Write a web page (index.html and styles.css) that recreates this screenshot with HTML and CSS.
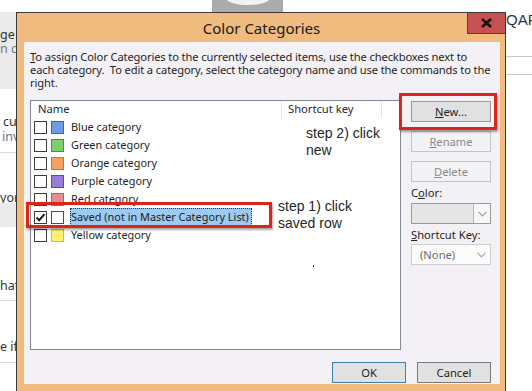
FILE: index.html
```html
<!DOCTYPE html>
<html>
<head>
<meta charset="utf-8">
<link rel="stylesheet" href="styles.css">
</head>
<body>
<div class="app">
  <div class="lp">
    <div class="lp-top"></div>
    <div class="lp-gray"><div class="t-dark">ge</div><div class="t-gray">n ca</div></div>
    <div class="lp-sec1"><div class="t-dark cu">cu</div><div class="t-blue">inv</div></div>
    <div class="lp-sec2"><div class="t-dark">yor</div></div>
    <div class="lp-band"></div>
    <div class="lp-sec3"><div class="t-dark">hat</div></div>
    <div class="lp-sec4"><div class="t-dark">e if</div></div>
  </div>
  <div class="mp">
    <div class="avatar"><div class="head"></div></div>
  </div>
  <div class="rp">
    <div class="qar">QAR</div>
    <div class="rp-lines"></div>
  </div>
</div>

<div class="dialog">
  <div class="titlebar">
    <div class="title">Color Categories</div>
    <div class="close"><svg width="11" height="10" viewBox="0 0 11 10"><path d="M1 1 L10 9 M10 1 L1 9" stroke="#111" stroke-width="2.6" fill="none"/></svg></div>
  </div>
  <div class="dbody">
    <p class="intro"><u>T</u>o assign Color Categories to the currently selected items, use the checkboxes next to<br>each category.&nbsp; To edit a category, select the category name and use the commands to the<br>right.</p>
    <div class="main">
      <div class="list">
        <div class="list-head">
          <div class="hcell hname">Name</div>
          <div class="hcell hkey">Shortcut key</div>
          <div class="hcell hrest"></div>
        </div>
        <div class="row"><span class="cb"></span><span class="sw blue"></span><span class="lbl">Blue category</span></div>
        <div class="row"><span class="cb"></span><span class="sw green"></span><span class="lbl">Green category</span></div>
        <div class="row"><span class="cb"></span><span class="sw orange"></span><span class="lbl">Orange category</span></div>
        <div class="row"><span class="cb"></span><span class="sw purple"></span><span class="lbl">Purple category</span></div>
        <div class="row"><span class="cb"></span><span class="sw red"></span><span class="lbl">Red category</span></div>
        <div class="row"><span class="cb"><svg width="11" height="11" viewBox="0 0 11 11"><path d="M1.5 5.5 L4.2 8.2 L9.5 2.2" stroke="#1a1a1a" stroke-width="2" fill="none"/></svg></span><span class="sw none"></span><span class="lbl sel">Saved (not in Master Category List)</span></div>
        <div class="row"><span class="cb"></span><span class="sw yellow"></span><span class="lbl">Yellow category</span></div>
      </div>
      <div class="side">
        <div class="btn"><span><u>N</u>ew...</span></div>
        <div class="btn dis gap"><span><u>R</u>ename</span></div>
        <div class="btn dis gap"><span><u>D</u>elete</span></div>
        <div class="flabel">C<u>o</u>lor:</div>
        <div class="combo cdis"><span class="cval"></span><span class="carrow"><svg width="9" height="6" viewBox="0 0 9 6"><path d="M0.5 0.8 L4.5 4.8 L8.5 0.8" stroke="#a0a0a0" stroke-width="1.2" fill="none"/></svg></span></div>
        <div class="flabel"><u>S</u>hortcut Key:</div>
        <div class="combo cnone"><span class="cval">(None)</span><span class="carrow"><svg width="9" height="6" viewBox="0 0 9 6"><path d="M0.5 0.8 L4.5 4.8 L8.5 0.8" stroke="#a8a8a8" stroke-width="1.2" fill="none"/></svg></span></div>
      </div>
    </div>
    <div class="foot">
      <div class="btn ok">OK</div>
      <div class="btn cancel">Cancel</div>
    </div>
  </div>
</div>

<div class="mark mark-saved"></div>
<div class="mark mark-new"></div>
<div class="note note2">step 2) click<br>new</div>
<div class="note note1">step 1) click<br>saved row</div>
<div class="dot"></div>
</body>
</html>
```

FILE: styles.css
```css
* { box-sizing: border-box; }
html, body { margin: 0; padding: 0; }
body {
  width: 532px;
  height: 391px;
  overflow: hidden;
  position: relative;
  background: #ffffff;
  font-family: "Noto Sans", "Open Sans", sans-serif;
  color: #1e1e1e;
}

/* background application */
.app {
  display: grid;
  grid-template-columns: 16px 490px 26px;
  grid-template-rows: 391px;
  height: 391px;
}
.lp { display: flex; flex-direction: column; overflow: hidden; font-size: 12.5px; white-space: nowrap; }
.lp > div { overflow: hidden; flex: none; }
.lp-top { height: 12px; }
.lp-gray { height: 77px; background: #eaeaea; padding-top: 16px; line-height: 14px; }
.lp-sec1 { height: 64px; border-bottom: 1px solid #dcdcdc; padding-top: 25px; line-height: 15px; }
.lp-sec2 { height: 50px; padding-top: 38px; line-height: 14px; }
.lp-band { height: 24px; background: #ebebeb; }
.lp-sec3 { height: 74px; border-bottom: 1px solid #dcdcdc; padding-top: 52px; line-height: 14px; }
.lp-sec4 { height: 62px; border-bottom: 1px solid #dcdcdc; padding-top: 39px; line-height: 14px; }
.t-dark { color: #333; }
.t-gray { color: #777; }
.t-blue { color: #5f7383; padding-left: 2px; }
.cu { padding-left: 3px; }

.mp { height: 12px; padding-left: 196px; overflow: hidden; }
.avatar {
  width: 71px;
  height: 12px;
  background: #ababab;
  overflow: hidden;
  display: flex;
  justify-content: center;
}
.head { width: 46px; height: 16px; margin-top: -11px; border-radius: 50%; background: #f2f2f2; }

.rp { overflow: hidden; }
.qar { margin-top: 11px; font-size: 15px; line-height: 18px; color: #333; font-family: "Liberation Sans", sans-serif; }
.rp-lines { margin-top: 27px; height: 19px; border-top: 1px solid #c8c8c8; border-bottom: 1px solid #c8c8c8; }

/* dialog */
.dialog {
  position: absolute;
  z-index: 1;
  left: 16px;
  top: 12px;
  width: 490px;
  height: 390px;
  background: #efbb7f;
  border: 1px solid #3a3a3a;
  border-bottom: none;
}
.titlebar { display: grid; height: 29px; }
.title, .close { grid-area: 1 / 1; }
.title { justify-self: center; align-self: center; font-size: 15px; color: #1a1a1a; padding-left: 1px; }
.close {
  justify-self: end;
  align-self: start;
  width: 38px;
  height: 21px;
  background: #c75050;
  border: 1px solid #7d2f2f;
  border-top: none;
  border-right: none;
  display: flex;
  align-items: center;
  justify-content: center;
}

.dbody {
  margin: 0 5px 0 7px;
  height: 342px;
  background: #f4f1f6;
  border-left: 1px solid #faf3ea;
  padding: 8px 9px 0 5px;
}
.intro { margin: 0; font-size: 11.15px; letter-spacing: -0.12px; line-height: 13px; white-space: nowrap; color: #1e1e1e; }
.main {
  display: grid;
  grid-template-columns: 371px 80px;
  column-gap: 10px;
  margin-top: 11px;
}
.list { height: 250px; border: 1px solid #828790; background: #fff; font-size: 10.9px; }
.list-head { display: grid; grid-template-columns: 251px 100px 1fr; height: 17px; }
.hcell { border-right: 1px solid #e5e5e5; line-height: 16px; color: #1e2a3a; font-size: 11.2px; }
.hname { padding-left: 7px; }
.hkey { padding-left: 6px; }
.hrest { border-right: none; }

.row { display: flex; align-items: center; height: 18px; padding-left: 3px; }
.cb {
  width: 13px; height: 13px;
  border: 1px solid #3c3c3c;
  background: #fff;
  display: flex; align-items: center; justify-content: center;
}
.sw { width: 13px; height: 13px; margin-left: 4px; border: 1px solid; }
.blue { background: #6d9ce6; border-color: #3a66b8; }
.green { background: #7dcf6e; border-color: #3f9a31; }
.orange { background: #f8a060; border-color: #d2712c; }
.purple { background: #9a7bd7; border-color: #6747a6; }
.red { background: #e38f8f; border-color: #c25c5c; }
.yellow { background: #fff16b; border-color: #cdbf3a; }
.none { background: #fff; border-color: #4a4a4a; }
.lbl { margin-left: 7px; line-height: 18px; white-space: nowrap; }
.lbl.sel {
  margin-left: 6px;
  padding: 0 2px 0 0;
  background: #9ccaf0;
  border: 1px dotted #333;
  line-height: 16px;
}

.side { display: flex; flex-direction: column; padding-top: 1px; font-size: 11.2px; }
.btn {
  height: 21px;
  display: flex; align-items: center; justify-content: center;
  background: #e1e1e1;
  border: 1px solid #9a9a9a;
  font-size: 11.2px;
  color: #1e1e1e;
}
.btn.gap { margin-top: 9px; }
.btn.dis { background: #f3f2f4; border-color: #c4c4c4; color: #8a8a8a; }
.flabel { margin-top: 4px; line-height: 14px; color: #1e1e1e; }
.combo { height: 21px; display: flex; margin-top: 3px; border: 1px solid; }
.cdis { border-color: #9b9b9b; background: #e6e6e6; }
.cdis .carrow { background: #f7f7f7; border-left: 1px solid #b9b9b9; }
.cnone { border-color: #cfcfcf; background: #fbfbfb; margin-top: 2px; }
.cval { flex: 1; padding-left: 8px; line-height: 19px; color: #6d6d6d; }
.carrow { width: 17px; display: flex; align-items: center; justify-content: center; }

.foot { display: flex; justify-content: flex-end; gap: 11px; margin-top: 12px; }
.foot .btn { width: 74px; }
.ok { border-color: #3c7fb1; }
.cancel { border-color: #7a7a7a; }

/* annotations drawn over the screenshot */
.mark {
  position: absolute;
  z-index: 2;
  border: 3px solid #dd2418;
  box-shadow: 1px 2px 2px rgba(0,0,0,0.35);
}
.mark-saved { left: 26px; top: 202px; width: 246px; height: 26px; }
.mark-new { left: 399px; top: 93px; width: 98px; height: 37px; }
.note {
  position: absolute;
  z-index: 2;
  font-family: "Liberation Sans", Arial, sans-serif;
  font-size: 14px;
  line-height: 17px;
  color: #262626;
  white-space: nowrap;
}
.note2 { left: 306px; top: 125px; }
.note1 { left: 278px; top: 198px; }
.dot { position: absolute; z-index: 2; left: 313px; top: 265px; width: 1px; height: 2px; background: #333; }
```
